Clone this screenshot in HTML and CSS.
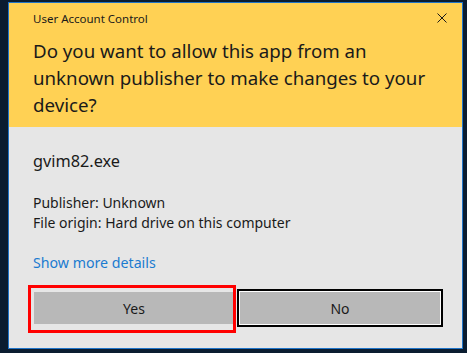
FILE: index.html
```html
<!DOCTYPE html>
<html lang="en">
<head>
  <meta charset="UTF-8">
  <title>User Account Control</title>
  <link rel="stylesheet" href="styles.css">
</head>
<body>

<div class="dialog">
  <div class="header">
    <div class="titlebar">
      <span class="title">User Account Control</span>
      <svg class="close" width="10" height="10" viewBox="0 0 10 10">
        <path d="M0.5 0.5 L9.5 9.5 M9.5 0.5 L0.5 9.5" stroke="#1a1a1a" stroke-width="1" fill="none" />
      </svg>
    </div>
    <p class="question">Do you want to allow this app from an unknown publisher to make changes to your device?</p>
  </div>

  <div class="content">
    <p class="program">gvim82.exe</p>
    <p class="info">Publisher: Unknown<br>File origin: Hard drive on this computer</p>
    <a class="more" href="#">Show more details</a>

    <div class="buttons">
      <button class="btn yes">Yes</button>
      <button class="btn no">No</button>
    </div>
  </div>
</div>

</body>
</html>
```

FILE: styles.css
```css
body {
  margin: 0;
  height: 353px;
  overflow: hidden;
  background: #0a1c30;
  font-family: "Noto Sans", "Open Sans", sans-serif;
  color: #1a1a1a;
}

.dialog {
  margin: 2px 0 0 8px;
  width: 453px;
  height: 345px;
  border: 1px solid #1f74c9;
  background: #e6e6e6;
  display: flex;
  flex-direction: column;
}

.header {
  background: #ffd154;
  height: 116px;
  padding: 8px 0 0 24px;
}

.titlebar {
  display: flex;
  justify-content: space-between;
  align-items: center;
  padding-right: 15px;
}

.title {
  font-size: 11.5px;
  line-height: 16px;
}

.close {
  margin-top: -2px;
}

.question {
  margin: 10px 0 0;
  padding-right: 10px;
  font-size: 18.7px;
  line-height: 27px;
}

.content {
  padding: 24px 19px 0 22px;
}

.program {
  margin: 0 0 0 2px;
  font-size: 16.3px;
  line-height: 20px;
}

.info {
  margin: 22px 0 0 2px;
  font-size: 14px;
  line-height: 20px;
}

.more {
  display: block;
  margin: 20px 0 0 2px;
  font-size: 14.2px;
  line-height: 20px;
  color: #1b7bd0;
  text-decoration: none;
}

.buttons {
  display: flex;
  margin-top: 16px;
}

.btn {
  width: 206px;
  height: 38px;
  font-family: "Noto Sans", "Open Sans", sans-serif;
  font-size: 14px;
  color: #1a1a1a;
  background: #b8b8b8;
  padding: 0;
}

.yes {
  position: relative;
  border: 3px solid #e6e6e6;
}

.yes::after {
  content: "";
  position: absolute;
  top: -7px;
  left: -6px;
  right: -2px;
  bottom: -9px;
  border: 3px solid #ff0000;
}

.no {
  border: 2px solid #000;
  box-shadow: inset 0 0 0 1px #fff;
}
```
